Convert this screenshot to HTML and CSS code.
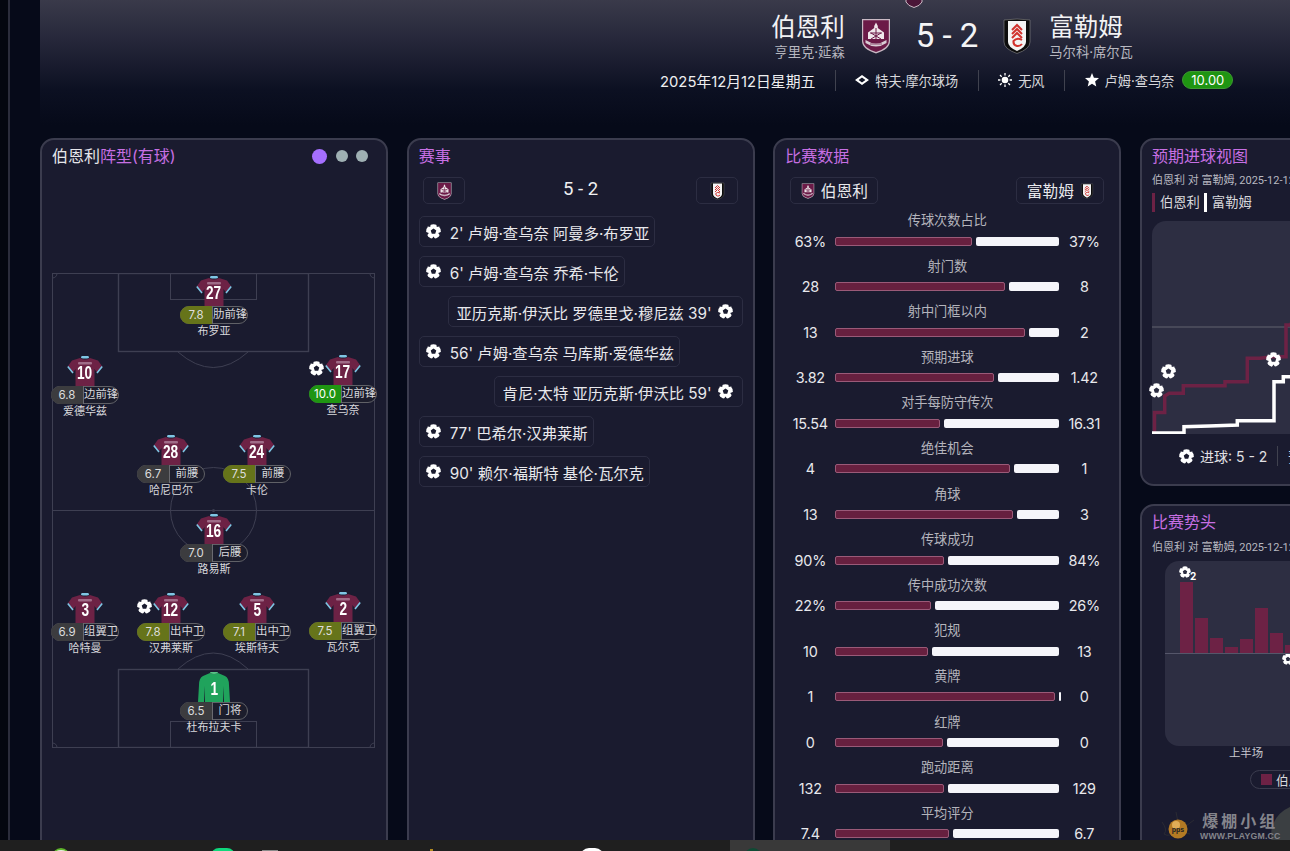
FILE: index.html
```html
<!DOCTYPE html>
<html lang="zh">
<head>
<meta charset="utf-8">
<title>伯恩利 5 - 2 富勒姆</title>
<link rel="stylesheet" href="styles.css">
</head>
<body>
<svg class="sprite" aria-hidden="true">
  <defs>
    <mask id="ball-mask">
      <rect width="16" height="16" fill="#fff"/>
      <path fill="#000" d="M8 4.9L10.95 7.04 9.83 10.5H6.17L5.05 7.04ZM6.2 16H9.8L8 13.2ZM13 9.6L16.5 8.2 15.3 12.8ZM3 9.6L-.5 8.2 .7 12.8ZM11.5 3.2L11 0 14.8 2.4ZM4.5 3.2L5 0 1.2 2.4Z"/>
    </mask>
    <symbol id="ball" viewBox="0 0 16 16">
      <circle cx="8" cy="8" r="7.8" fill="#fff" mask="url(#ball-mask)"/>
    </symbol>
    <symbol id="shirt" viewBox="0 0 36 30">
      <path fill="#6d2245" d="M13 2 L5 4.5 L1 10 L6 16.5 L8.5 13 V30 H27.5 V13 L30 16.5 L35 10 L31 4.5 L23 2 Q18 5 13 2Z"/>
      <path fill="#7fc6e4" d="M14 2 Q14 0 15 0 H21 Q22 0 22 2 Q18 3 14 2Z"/>
      <path fill="none" stroke="#7fc6e4" stroke-width="1.6" d="M.8 10.5 L6 17 M35.2 10.5 L30 17"/>
      <rect x="11" y="6" width="14" height="2.4" rx="1" fill="#a06c88"/>
    </symbol>
    <symbol id="keeper" viewBox="0 0 36 30">
      <path fill="#20a35c" d="M14 1 L7 4 Q3 6 3 13 L2 30 H8 L9 14 V30 H27 V14 L28 30 H34 L33 13 Q33 6 29 4 L22 1 Q18 3 14 1Z"/>
      <path fill="#58c486" d="M14 1 Q14 0 15 0 H21 Q22 0 22 1 Q18 3 14 1Z"/>
    </symbol>
    <symbol id="burnley" viewBox="0 0 30 36">
      <path fill="#c9b9c4" d="M1 1H29V23Q29 31 15 35.5Q1 31 1 23Z"/>
      <path fill="#6b1a47" d="M2.2 2.2H27.8V23Q27.8 30 15 34Q2.2 30 2.2 23Z"/>
      <path fill="#eee6ea" d="M15 4.5L16.8 8V10L23 14.5V21H7V14.5L13.2 10V8Z"/>
      <path fill="none" stroke="#6b1a47" stroke-width="1" d="M9 15H21M10 15L20 21M20 15L10 21M15 10V21"/>
      <path fill="#d9cdd5" d="M4.5 22Q15 29 25.5 22V25Q15 32 4.5 25Z"/>
      <path fill="#8a4a6c" d="M9 25.5H21V26.5H9Z"/>
    </symbol>
    <symbol id="fulham" viewBox="0 0 28 36">
      <path fill="#0d0d0d" stroke="#8a8a8a" stroke-width=".6" d="M1 2Q14 0 27 2V24Q27 31 14 35.5Q1 31 1 24Z"/>
      <path fill="#f4f4f4" d="M5 3H23V24Q23 29 14 33Q5 29 5 24Z"/>
      <path fill="none" stroke="#d1322d" stroke-width="2" d="M9 12L14 7 19 12M9 16L14 11 19 16M9 20L14 15 19 20"/>
      <path fill="none" stroke="#d1322d" stroke-width="2" d="M19 22Q14 19 10.5 23Q10 27 14 28Q17 28.5 19 26"/>
    </symbol>
  </defs>
</svg>

<div class="page">
  <div class="rail"></div>
  <main class="main">
    <header class="header">
      <svg class="top-tip" viewBox="0 0 18 8"><path fill="#4a1638" stroke="#cbbcc6" d="M1-2H17V2Q15 6 9 7.5Q3 6 1 2Z"/></svg>
      <div class="team-row">
        <div class="team team-home">
          <div class="team-text">
            <div class="team-name">伯恩利</div>
            <div class="team-coach">亨里克·延森</div>
          </div>
          <svg class="crest-l"><use href="#burnley"/></svg>
        </div>
        <div class="score">5 - 2</div>
        <div class="team">
          <svg class="crest-f"><use href="#fulham"/></svg>
          <div class="team-text">
            <div class="team-name">富勒姆</div>
            <div class="team-coach">马尔科·席尔瓦</div>
          </div>
        </div>
      </div>
      <div class="info-row">
        <span class="info-date">2025年12月12日星期五</span>
        <span class="info-sep"></span>
        <svg class="info-icon" viewBox="0 0 14 14"><path fill="#fff" fill-rule="evenodd" d="M7 2L14 7 7 12 0 7ZM7 4.6L3.6 7 7 9.4 10.4 7Z"/></svg>
        <span class="info-text">特夫·摩尔球场</span>
        <span class="info-sep"></span>
        <svg class="info-icon" viewBox="0 0 14 14"><circle cx="7" cy="7" r="3.3" fill="#fff"/><path stroke="#fff" stroke-width="1.3" d="M7 0V2.4M7 11.6V14M0 7H2.4M11.6 7H14M2 2L3.7 3.7M10.3 10.3L12 12M12 2L10.3 3.7M3.7 10.3L2 12"/></svg>
        <span class="info-text">无风</span>
        <span class="info-sep"></span>
        <svg class="info-icon" viewBox="0 0 14 14"><path fill="#fff" d="M7 0L8.9 4.7 14 5.1 10.1 8.4 11.3 13.5 7 10.8 2.7 13.5 3.9 8.4 0 5.1 5.1 4.7Z"/></svg>
        <span class="info-text">卢姆·查乌奈</span>
        <span class="info-badge">10.00</span>
      </div>
    </header>

    <div class="cards">
      <section class="card">
        <div class="card-head">
          <h2 class="card-title"><span class="white">伯恩利</span>阵型(有球)</h2>
          <div class="dots"><i class="dot dot-on"></i><i class="dot"></i><i class="dot"></i></div>
        </div>
        <div class="pitch">
          <svg class="pitch-lines" viewBox="0 0 323 475">
            <g fill="none" stroke="#3e3f52" stroke-width="1">
              <rect x=".5" y=".5" width="322" height="474"/>
              <rect x="66.5" y=".5" width="190" height="78" stroke-width="1.4"/>
              <rect x="118.5" y=".5" width="86" height="26"/>
              <rect x="66.5" y="396.5" width="190" height="78" stroke-width="1.4"/>
              <rect x="118.5" y="448.5" width="86" height="26"/>
              <path d="M.5 237.5H322.5"/>
              <circle cx="161.5" cy="237.5" r="43"/>
              <path d="M126 79Q161.5 110 196 79M126 396Q161.5 364 196 396"/>
              <path d="M5 .5A4.5 4.5 0 0 1 .5 5M318 .5A4.5 4.5 0 0 0 322.5 5M5 474.5A4.5 4.5 0 0 0 .5 470M318 474.5A4.5 4.5 0 0 1 322.5 470"/>
            </g>
            <circle cx="161.5" cy="237.5" r="1.5" fill="#3e3f52"/>
          </svg>

          <div class="player pos-a">
            <div class="shirt"><svg><use href="#shirt"/></svg><b>27</b></div>
            <div class="pill"><span class="rate olive">7.8</span><span class="role">肋前锋</span></div>
            <div class="pname">布罗亚</div>
          </div>
          <div class="player pos-b">
            <div class="shirt"><svg><use href="#shirt"/></svg><b>10</b></div>
            <div class="pill"><span class="rate">6.8</span><span class="role">边前锋</span></div>
            <div class="pname">爱德华兹</div>
          </div>
          <div class="player pos-c">
            <svg class="pball"><use href="#ball"/></svg>
            <div class="shirt"><svg><use href="#shirt"/></svg><b>17</b></div>
            <div class="pill"><span class="rate green">10.0</span><span class="role">边前锋</span></div>
            <div class="pname">查乌奈</div>
          </div>
          <div class="player pos-d">
            <div class="shirt"><svg><use href="#shirt"/></svg><b>28</b></div>
            <div class="pill"><span class="rate">6.7</span><span class="role">前腰</span></div>
            <div class="pname">哈尼巴尔</div>
          </div>
          <div class="player pos-e">
            <div class="shirt"><svg><use href="#shirt"/></svg><b>24</b></div>
            <div class="pill"><span class="rate olive">7.5</span><span class="role">前腰</span></div>
            <div class="pname">卡伦</div>
          </div>
          <div class="player pos-f">
            <div class="shirt"><svg><use href="#shirt"/></svg><b>16</b></div>
            <div class="pill"><span class="rate">7.0</span><span class="role">后腰</span></div>
            <div class="pname">路易斯</div>
          </div>
          <div class="player pos-g">
            <div class="shirt"><svg><use href="#shirt"/></svg><b>3</b></div>
            <div class="pill"><span class="rate">6.9</span><span class="role">组翼卫</span></div>
            <div class="pname">哈特曼</div>
          </div>
          <div class="player pos-h">
            <svg class="pball"><use href="#ball"/></svg>
            <div class="shirt"><svg><use href="#shirt"/></svg><b>12</b></div>
            <div class="pill"><span class="rate olive">7.8</span><span class="role">出中卫</span></div>
            <div class="pname">汉弗莱斯</div>
          </div>
          <div class="player pos-i">
            <div class="shirt"><svg><use href="#shirt"/></svg><b>5</b></div>
            <div class="pill"><span class="rate olive">7.1</span><span class="role">出中卫</span></div>
            <div class="pname">埃斯特夫</div>
          </div>
          <div class="player pos-j">
            <div class="shirt"><svg><use href="#shirt"/></svg><b>2</b></div>
            <div class="pill"><span class="rate olive">7.5</span><span class="role">组翼卫</span></div>
            <div class="pname">瓦尔克</div>
          </div>
          <div class="player pos-k">
            <div class="shirt"><svg><use href="#keeper"/></svg><b>1</b></div>
            <div class="pill"><span class="rate">6.5</span><span class="role">门将</span></div>
            <div class="pname">杜布拉夫卡</div>
          </div>
        </div>
      </section>

      <section class="card">
        <div class="card-head"><h2 class="card-title">赛事</h2></div>
        <div class="event-head">
          <div class="chip chip-crest"><svg class="crest-sm"><use href="#burnley"/></svg></div>
          <div class="event-score">5 - 2</div>
          <div class="chip chip-crest"><svg class="crest-sm"><use href="#fulham"/></svg></div>
        </div>
        <div class="events">
          <div class="event"><svg class="eball"><use href="#ball"/></svg><span>2' 卢姆·查乌奈 阿曼多·布罗亚</span></div>
          <div class="event"><svg class="eball"><use href="#ball"/></svg><span>6' 卢姆·查乌奈 乔希·卡伦</span></div>
          <div class="event event-away"><span>亚历克斯·伊沃比 罗德里戈·穆尼兹 39'</span><svg class="eball"><use href="#ball"/></svg></div>
          <div class="event"><svg class="eball"><use href="#ball"/></svg><span>56' 卢姆·查乌奈 马库斯·爱德华兹</span></div>
          <div class="event event-away"><span>肯尼·太特 亚历克斯·伊沃比 59'</span><svg class="eball"><use href="#ball"/></svg></div>
          <div class="event"><svg class="eball"><use href="#ball"/></svg><span>77' 巴希尔·汉弗莱斯</span></div>
          <div class="event"><svg class="eball"><use href="#ball"/></svg><span>90' 赖尔·福斯特 基伦·瓦尔克</span></div>
        </div>
      </section>

      <section class="card">
        <div class="card-head"><h2 class="card-title">比赛数据</h2></div>
        <div class="stat-head">
          <div class="chip chip-team"><svg class="crest-xs"><use href="#burnley"/></svg><span>伯恩利</span></div>
          <div class="chip chip-team"><span>富勒姆</span><svg class="crest-xs"><use href="#fulham"/></svg></div>
        </div>
        <div class="stats">
          <div class="stat"><div class="stat-label">传球次数占比</div><div class="stat-val">63%</div><div class="bars"><i class="bar-h" style="width:137px"></i><i class="bar-a"></i></div><div class="stat-val">37%</div></div>
          <div class="stat"><div class="stat-label">射门数</div><div class="stat-val">28</div><div class="bars"><i class="bar-h" style="width:170px"></i><i class="bar-a"></i></div><div class="stat-val">8</div></div>
          <div class="stat"><div class="stat-label">射中门框以内</div><div class="stat-val">13</div><div class="bars"><i class="bar-h" style="width:190px"></i><i class="bar-a"></i></div><div class="stat-val">2</div></div>
          <div class="stat"><div class="stat-label">预期进球</div><div class="stat-val">3.82</div><div class="bars"><i class="bar-h" style="width:159px"></i><i class="bar-a"></i></div><div class="stat-val">1.42</div></div>
          <div class="stat"><div class="stat-label">对手每防守传次</div><div class="stat-val">15.54</div><div class="bars"><i class="bar-h" style="width:105px"></i><i class="bar-a"></i></div><div class="stat-val">16.31</div></div>
          <div class="stat"><div class="stat-label">绝佳机会</div><div class="stat-val">4</div><div class="bars"><i class="bar-h" style="width:175px"></i><i class="bar-a"></i></div><div class="stat-val">1</div></div>
          <div class="stat"><div class="stat-label">角球</div><div class="stat-val">13</div><div class="bars"><i class="bar-h" style="width:178px"></i><i class="bar-a"></i></div><div class="stat-val">3</div></div>
          <div class="stat"><div class="stat-label">传球成功</div><div class="stat-val">90%</div><div class="bars"><i class="bar-h" style="width:109px"></i><i class="bar-a"></i></div><div class="stat-val">84%</div></div>
          <div class="stat"><div class="stat-label">传中成功次数</div><div class="stat-val">22%</div><div class="bars"><i class="bar-h" style="width:96px"></i><i class="bar-a"></i></div><div class="stat-val">26%</div></div>
          <div class="stat"><div class="stat-label">犯规</div><div class="stat-val">10</div><div class="bars"><i class="bar-h" style="width:93px"></i><i class="bar-a"></i></div><div class="stat-val">13</div></div>
          <div class="stat"><div class="stat-label">黄牌</div><div class="stat-val">1</div><div class="bars"><i class="bar-h" style="width:220px"></i><i class="bar-a bar-min"></i></div><div class="stat-val">0</div></div>
          <div class="stat"><div class="stat-label">红牌</div><div class="stat-val">0</div><div class="bars"><i class="bar-h" style="width:108px"></i><i class="bar-a"></i></div><div class="stat-val">0</div></div>
          <div class="stat"><div class="stat-label">跑动距离</div><div class="stat-val">132</div><div class="bars"><i class="bar-h" style="width:109px"></i><i class="bar-a"></i></div><div class="stat-val">129</div></div>
          <div class="stat"><div class="stat-label">平均评分</div><div class="stat-val">7.4</div><div class="bars"><i class="bar-h" style="width:114px"></i><i class="bar-a"></i></div><div class="stat-val">6.7</div></div>
        </div>
      </section>

      <div class="card-stack">
        <section class="card card-xg">
          <div class="card-head"><h2 class="card-title">预期进球视图</h2></div>
          <div class="subtitle">伯恩利 对 富勒姆, 2025-12-12, 英格兰足球超级联赛</div>
          <div class="legend">
            <span class="legend-item legend-home">伯恩利</span>
            <span class="legend-item legend-away">富勒姆</span>
          </div>
          <div class="xg-chart">
            <svg class="xg-lines" viewBox="0 0 320 213">
              <path d="M0 106H320" stroke="#62636f" stroke-width="1" fill="none"/>
              <path d="M2.5 211V191.5H12.7V175L17.3 172.3H31.3V164.7H73V160.7H95.3V137.3H108L120 135.7H134V104H138L142 99H320" stroke="#6d2245" stroke-width="3.5" fill="none"/>
              <path d="M0 212H32V205.7L57.3 205 85.3 204V199.7H122V160.7H131.3V155.7H320" stroke="#fff" stroke-width="3.5" fill="none"/>
            </svg>
            <svg class="cball cball-a"><use href="#ball"/></svg>
            <svg class="cball cball-b"><use href="#ball"/></svg>
            <svg class="cball cball-c"><use href="#ball"/></svg>
          </div>
          <div class="xg-foot">
            <svg class="eball"><use href="#ball"/></svg>
            <span>进球: 5 - 2</span>
            <span class="foot-sep"></span>
            <span>预期进球: 3.82 - 1.42</span>
          </div>
        </section>

        <section class="card card-mom">
          <div class="card-head"><h2 class="card-title">比赛势头</h2></div>
          <div class="subtitle">伯恩利 对 富勒姆, 2025-12-12, 英格兰足球超级联赛</div>
          <div class="mom-chart">
            <div class="mom-bars">
              <i class="mom-bar" style="height:71px"></i>
              <i class="mom-bar" style="height:35px"></i>
              <i class="mom-bar" style="height:15px"></i>
              <i class="mom-bar" style="height:6px"></i>
              <i class="mom-bar" style="height:14px"></i>
              <i class="mom-bar" style="height:45px"></i>
              <i class="mom-bar" style="height:20px"></i>
              <i class="mom-bar" style="height:8px"></i>
            </div>
            <div class="mom-goal"><svg class="mball"><use href="#ball"/></svg><b>2</b></div>
            <svg class="mball mball-low"><use href="#ball"/></svg>
          </div>
          <div class="mom-half">上半场</div>
          <div class="mom-legend"><i class="mom-swatch"></i><span>伯恩利</span></div>
        </section>
      </div>
    </div>

    <div class="blob"></div>
    <div class="watermark">
      <svg class="wm-logo" viewBox="0 0 36 32">
        <path fill="none" stroke="#2a2a33" stroke-width="1" d="M2 12Q8 20 4 24Q10 28 14 20M16 2L18 12M34 10L26 16Q24 24 30 24"/>
        <circle cx="18" cy="19" r="9.5" fill="#b47a24"/>
        <circle cx="16" cy="15" r="4" fill="#e0ad58"/>
        <text class="wm-pps" x="18" y="22">pps</text>
      </svg>
      <div class="wm-text">
        <div class="wm-cn">爆棚小组</div>
        <div class="wm-en">WWW.PLAYGM.CC</div>
      </div>
    </div>
  </main>
</div>

<footer class="taskbar">
  <div class="task task-on"></div>
  <i class="tk tk-a"></i><i class="tk tk-b"></i><i class="tk tk-c"></i><i class="tk tk-d"></i><i class="tk tk-e"></i><i class="tk tk-f"></i>
</footer>
</body>
</html>
```

FILE: styles.css
```css
* { box-sizing: border-box; }
html, body { margin: 0; height: 851px; overflow: hidden; }
body {
  background: #060a19;
  color: #e6e6ea;
  font-family: Inter, "Noto Sans CJK SC", sans-serif;
  font-size: 14px;
  position: relative;
}
.sprite { position: absolute; width: 0; height: 0; }
.page { display: flex; height: 840px; overflow: hidden; }
.rail { width: 40px; flex: none; background: #060a19; border-left: 8.5px solid #04070f; position: relative; }
.rail::before { content: ""; display: block; width: 1.5px; height: 100%; background: #2b2d3b; }
.main { flex: 1; min-width: 0; position: relative; overflow: hidden; }

.header {
  height: 138px;
  padding: 10px 56px 0 620px;
  position: relative;
  background: linear-gradient(180deg, #3a3a4a 0, #26273a 40px, #0c1022 90px, #060a19 125px);
}
.top-tip { position: absolute; left: 865px; top: 0; width: 18px; height: 8px; }
.team-row { display: grid; grid-template-columns: 1fr auto 1fr; align-items: center; height: 52px; }
.team { display: flex; align-items: center; gap: 18px; }
.team-home { justify-content: flex-end; gap: 16px; }
.team-home .team-text { text-align: right; }
.team-name { font-size: 24.5px; line-height: 31px; color: #f2f2f4; }
.team-coach { font-size: 13.3px; line-height: 18px; color: #b8b8c0; }
.crest-l { width: 30px; height: 36px; }
.crest-f { width: 28px; height: 36px; }
.score { font-family: Roboto, sans-serif; font-size: 33px; line-height: 40px; margin: 0 25px; color: #f4f4f6; }
.info-row { display: flex; align-items: center; height: 22px; margin-top: 7px; }
.info-date { font-size: 14.8px; color: #eeeef0; white-space: nowrap; }
.info-sep { width: 1px; height: 21px; background: #40424f; margin: 0 19.5px; flex: none; }
.info-icon { width: 14px; height: 14px; flex: none; margin-right: 6px; }
.info-text { font-size: 13.2px; color: #d8d8dc; white-space: nowrap; }
.info-badge { margin-left: 8px; width: 51px; height: 18px; line-height: 16px; border: 1px solid #3c9a30; border-radius: 9px; background: #1f9512; color: #fff; font-size: 13px; text-align: center; }

.cards { display: grid; grid-template-columns: repeat(4, 348px); column-gap: 18.67px; align-items: start; }
.card {
  height: 800px;
  background: #1a1b2f;
  border: 2px solid #3b3c4e;
  border-radius: 14px;
  padding: 5px 10px 0;
  overflow: hidden;
}
.card-head { display: flex; justify-content: space-between; align-items: center; height: 22px; }
.card-title { margin: 0; font-size: 16px; line-height: 23px; height: 22px; font-weight: 400; color: #c66fe2; }
.white { color: #e6e6ea; }
.dots { display: flex; align-items: center; gap: 8.5px; margin-right: 8px; }
.dot { width: 12px; height: 12px; border-radius: 50%; background: #9fb0b3; }
.dot-on { width: 15px; height: 15px; background: #a56fff; }

.pitch { position: relative; width: 323px; height: 475px; margin-top: 106px; }
.pitch-lines { position: absolute; left: 0; top: 0; width: 323px; height: 475px; }
.player { position: absolute; width: 68px; display: flex; flex-direction: column; align-items: center; }
.pos-a { left: 128px; top: 3px; }
.pos-b { left: -1px; top: 83px; }
.pos-c { left: 257px; top: 82px; }
.pos-d { left: 85px; top: 162px; }
.pos-e { left: 171px; top: 162px; }
.pos-f { left: 128px; top: 241px; }
.pos-g { left: -1px; top: 320px; }
.pos-h { left: 85px; top: 320px; }
.pos-i { left: 171px; top: 320px; }
.pos-j { left: 257px; top: 319px; }
.pos-k { left: 128px; top: 399px; }
.shirt { position: relative; width: 36px; height: 30px; display: flex; align-items: center; justify-content: center; }
.shirt svg { position: absolute; inset: 0; width: 36px; height: 30px; }
.shirt b { position: relative; top: 2px; color: #fff; font-family: "Liberation Sans", sans-serif; font-size: 19px; font-weight: 700; line-height: 20px; transform: scaleX(.72); }
.pball { position: absolute; left: 0; top: 6px; width: 15px; height: 15px; }
.pill { display: flex; width: 68px; height: 18px; border: 1.5px solid #606167; border-radius: 9px; background: #1c1d2c; flex: none; }
.rate { width: 33px; margin: -1px 0 -1px -1px; flex: none; border-radius: 9px 0 0 9px; background: #3c3c3f; color: #ddd; font-size: 11.5px; line-height: 18px; text-align: center; border-right: 1px solid #6a6a70; }
.olive { background: #66741a; }
.green { background: #1f9512; color: #fff; }
.role { flex: 1; min-width: 0; font-size: 11.4px; line-height: 14px; text-align: center; color: #d8d8dc; white-space: nowrap; }
.pname { font-size: 11px; line-height: 14px; color: #d8d8dc; white-space: nowrap; }

.chip { border: 1px solid #2c2d42; border-radius: 5px; display: flex; align-items: center; justify-content: center; }
.event-head { display: flex; justify-content: space-between; align-items: center; height: 27px; margin-top: 10px; padding: 0 4.5px; }
.chip-crest { width: 42px; height: 27px; }
.crest-sm { width: 15px; height: 18px; }
.event-score { font-family: Roboto, sans-serif; font-size: 18.5px; color: #f0f0f2; margin-bottom: 3px; }
.events { display: flex; flex-direction: column; align-items: flex-start; gap: 9px; margin-top: 12px; }
.event { display: inline-flex; align-items: center; gap: 9px; height: 31px; padding: 0 5px 0 6px; border: 1px solid #2c2d42; border-radius: 5px; font-size: 15.3px; color: #e8e8ec; white-space: nowrap; }
.event-away { align-self: flex-end; padding-left: 8px; padding-right: 9px; gap: 6px; }
.eball { width: 15px; height: 15px; flex: none; }

.stat-head { display: flex; justify-content: space-between; height: 27px; margin-top: 10px; padding: 0 5px; }
.chip-team { width: 88px; height: 27px; gap: 6px; font-size: 15.7px; color: #e8e8ec; }
.crest-xs { width: 14px; height: 16px; }
.stats { margin-top: 8px; }
.stat { display: grid; grid-template-columns: 50px 224px 50px; grid-template-rows: 18px 22px; height: 45.6px; align-items: center; justify-items: center; }
.stat-label { grid-column: 1 / 4; margin-top: -2px; font-size: 13.2px; line-height: 18px; color: #b4b4bc; }
.stat-val { font-size: 14.4px; letter-spacing: -.2px; color: #e8e8ec; }
.bars { display: flex; gap: 4px; width: 224px; height: 9px; }
.bar-h { display: block; height: 9px; background: #67203f; border: 1px solid #9a5a78; border-radius: 2px; flex: none; }
.bar-a { display: block; flex: 1; height: 9px; background: #f5f5fa; border-radius: 2px; }
.bar-min { flex: none; width: 2px; }

.card-stack { display: flex; flex-direction: column; gap: 18px; }
.card-xg { height: 348px; }
.subtitle { font-family: Roboto, "Noto Sans CJK SC", sans-serif; font-size: 11px; line-height: 18px; color: #b8b8c0; white-space: nowrap; margin-top: 5px; }
.legend { display: flex; gap: 4px; height: 19px; margin-top: 3px; }
.legend-item { font-size: 13.3px; line-height: 18px; color: #d8d8dc; padding-left: 5px; border-left: 3px solid #6d2245; }
.legend-away { border-left-color: #fff; }
.xg-chart { position: relative; height: 213px; margin-top: 9px; background: #2d2e42; border-radius: 14px 14px 0 0; }
.xg-lines { position: absolute; left: 0; top: 0; width: 320px; height: 213px; }
.cball { position: absolute; width: 15px; height: 15px; }
.cball-a { left: -3px; top: 162px; }
.cball-b { left: 9px; top: 143px; }
.cball-c { left: 114px; top: 131px; }
.xg-foot { display: flex; align-items: center; gap: 6px; height: 20px; margin-top: 12px; padding-left: 27px; font-size: 14px; color: #e0e0e4; white-space: nowrap; }
.foot-sep { width: 1px; height: 20px; background: #40424f; margin: 0 4px; }

.card-mom { height: 400px; }
.card-mom .subtitle { margin-top: 6px; }
.mom-chart { position: relative; width: 296px; height: 185px; margin: 4px 0 0 13px; background: #2d2e42; border-radius: 14px; }
.mom-chart::after { content: ""; position: absolute; left: 0; right: 0; top: 92px; height: 1px; background: #55566a; }
.mom-bars { position: absolute; left: 15px; top: 0; height: 92px; display: flex; align-items: flex-end; gap: 1.7px; }
.mom-bar { display: block; width: 13.3px; background: #6d2245; }
.mom-goal { position: absolute; left: 14px; top: 5px; display: flex; align-items: flex-end; }
.mom-goal b { font-size: 10px; line-height: 10px; font-weight: 700; color: #fff; margin-left: -1px; margin-bottom: -3px; }
.mball { display: block; width: 12px; height: 12px; }
.mball-low { position: absolute; left: 117px; top: 92px; }
.mom-half { width: 162px; margin-left: 13px; text-align: center; font-size: 11.4px; line-height: 14px; color: #c8c8d0; }
.mom-legend { display: inline-flex; align-items: center; gap: 4px; height: 19px; margin: 10px 0 0 98px; padding: 0 10px; border: 1px solid #3b3c4e; border-radius: 10px; font-size: 12.6px; color: #d8d8dc; }
.mom-swatch { width: 11px; height: 11px; background: #6d2245; }

.blob { position: absolute; left: 1231px; top: 805px; width: 60px; height: 60px; border-radius: 50%; background: #3b3f42; }
.watermark { position: absolute; left: 1120px; top: 810px; display: flex; gap: 4px; }
.wm-logo { width: 36px; height: 32px; }
.wm-pps { font-family: "Liberation Sans", sans-serif; font-size: 7px; font-weight: 700; text-anchor: middle; fill: #222; }
.wm-text { display: flex; flex-direction: column; align-items: center; }
.wm-cn { font-family: "Noto Sans CJK SC", serif; font-size: 16px; line-height: 21px; letter-spacing: 3px; color: #85858c; font-weight: 700; }
.wm-en { font-family: "Liberation Sans", sans-serif; font-size: 8.7px; line-height: 10px; font-weight: 700; letter-spacing: .2px; color: #85858c; }

.taskbar { position: relative; height: 11px; background: #1f1f1f; overflow: hidden; }
.task-on { position: absolute; left: 730px; top: 0; width: 160px; height: 11px; background: #393939; }
.tk { position: absolute; }
.tk-a { left: 52px; top: 8px; width: 18px; height: 18px; border-radius: 50%; background: #e6efe0; border-top: 2px solid #5fb52a; }
.tk-b { left: 211px; top: 8px; width: 24px; height: 18px; border-radius: 8px; background: #0fd87c; }
.tk-c { left: 262px; top: 10px; width: 16px; height: 8px; background: #8a8a8a; }
.tk-d { left: 430px; top: 9px; width: 3px; height: 4px; background: #b08a20; }
.tk-e { left: 580px; top: 8px; width: 24px; height: 18px; border-radius: 9px; background: #fff; }
.tk-f { left: 744px; top: 8px; width: 18px; height: 18px; border-radius: 50%; background: #0f4a34; }
```
